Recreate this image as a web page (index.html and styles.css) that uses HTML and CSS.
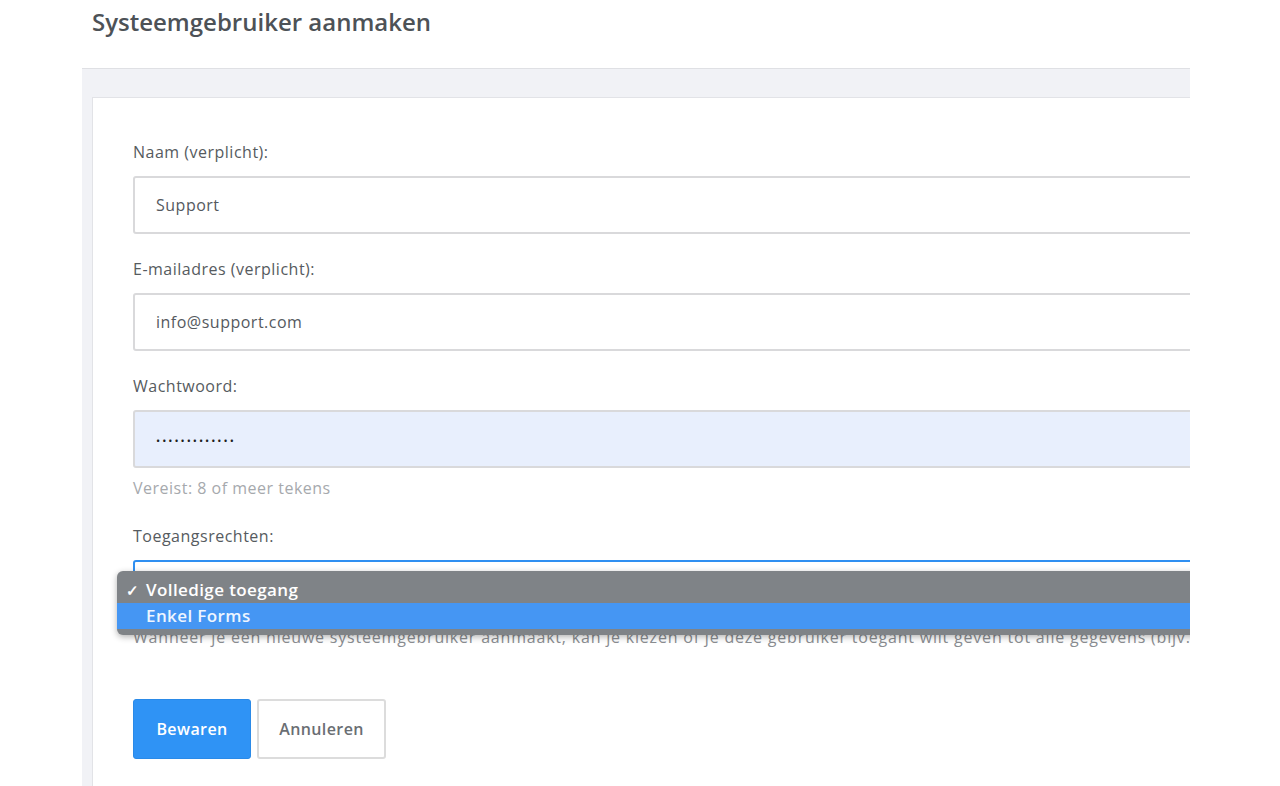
FILE: index.html
```html
<!DOCTYPE html>
<html lang="nl">
<head>
    <meta charset="UTF-8">
    <meta name="viewport" content="width=device-width, initial-scale=1.0">
    <title>Systeemgebruiker aanmaken</title>
    <link rel="stylesheet" href="styles.css">
</head>
<body>
    <div class="page">
        <h1 class="title">Systeemgebruiker aanmaken</h1>

        <div class="panel">
            <div class="card">
                <form class="form">
                    <div class="field">
                        <label class="label" for="naam">Naam (verplicht):</label>
                        <input class="input" id="naam" type="text" value="Support">
                    </div>

                    <div class="field">
                        <label class="label" for="email">E-mailadres (verplicht):</label>
                        <input class="input" id="email" type="text" value="info@support.com">
                    </div>

                    <div class="field">
                        <label class="label" for="pass">Wachtwoord:</label>
                        <div class="input input-password" id="pass">•••••••••••••</div>
                        <div class="hint">Vereist: 8 of meer tekens</div>
                    </div>

                    <div class="field field-select">
                        <label class="label">Toegangsrechten:</label>
                        <div class="select-wrap">
                            <div class="input select"></div>
                            <!-- open native menu -->
                            <div class="menu">
                                <div class="menu-item checked"><span class="check">✓</span>Volledige toegang</div>
                                <div class="menu-item active">Enkel Forms</div>
                            </div>
                        </div>
                        <div class="desc">Wanneer je een nieuwe systeemgebruiker aanmaakt, kan je kiezen of je deze gebruiker toegant wilt geven tot alle gegevens (bijv.</div>
                    </div>

                    <div class="actions">
                        <button type="button" class="btn btn-primary">Bewaren</button>
                        <button type="button" class="btn btn-default">Annuleren</button>
                    </div>
                </form>
            </div>
        </div>
    </div>
</body>
</html>
```

FILE: styles.css
```css
body {
    margin: 0;
    background-color: #fff;
    font-family: "Open Sans", Lato, Arial, sans-serif;
    color: #555a5f;
}
.page {
    width: 1190px;
    height: 786px;
    overflow: hidden;
}
.title {
    margin: 0;
    padding: 6px 0 0 92px;
    height: 68px;
    box-sizing: border-box;
    font-size: 24px;
    font-weight: 600;
    line-height: 32px;
    color: #4d5257;
}
.panel {
    margin-left: 82px;
    width: 1300px;
    height: 720px;
    padding: 28px 0 0 10px;
    box-sizing: border-box;
    background-color: #f1f2f6;
    border-top: 1px solid #dfe0e4;
}
.card {
    background-color: #fff;
    border: 1px solid #e2e3e7;
    padding: 44px 40px 40px 40px;
    height: 800px;
}
.field {
    margin-bottom: 25px;
}
.label {
    display: block;
    font-size: 16px;
    letter-spacing: 0.5px;
    line-height: 20px;
    margin-bottom: 14px;
    color: #565b60;
}
.input {
    display: block;
    width: 1150px;
    height: 58px;
    box-sizing: border-box;
    padding: 0 21px;
    border: 2px solid #d9d9db;
    border-radius: 3px;
    font-family: inherit;
    font-size: 16px;
    letter-spacing: 0.5px;
    color: #55595e;
    background-color: #fff;
    outline: none;
}
.input-password {
    background-color: #e8effd;
    font-size: 11px;
    padding-top: 3px;
    line-height: 51px;
    letter-spacing: 2px;
    color: #1e1e1e;
}
.hint {
    margin-top: 10px;
    font-size: 16px;
    letter-spacing: 0.5px;
    line-height: 20px;
    color: #a6a9ad;
}
.field-select .label {
    margin-top: 28px;
}
.select-wrap {
    position: relative;
}
.select {
    border-color: #2f8ff1;
}
.menu {
    position: absolute;
    left: -16px;
    top: 11px;
    width: 1200px;
    padding: 6px 0;
    background-color: #7f8387;
    border-radius: 6px;
    box-shadow: 0 2px 6px rgba(0, 0, 0, 0.3);
}
.menu-item {
    height: 26px;
    line-height: 26px;
    padding-left: 29px;
    font-size: 17px;
    letter-spacing: 0.4px;
    font-weight: 600;
    color: #fff;
    position: relative;
}
.menu-item.active {
    background-color: #4596f3;
    color: #eef5ff;
}
.check {
    position: absolute;
    left: 9px;
    font-size: 15px;
}
.desc {
    margin-top: 10px;
    font-size: 16px;
    letter-spacing: 0.8px;
    line-height: 18px;
    color: #8a8d91;
    white-space: nowrap;
}
.actions {
    margin-top: 53px;
    display: flex;
    gap: 6px;
}
.btn {
    height: 60px;
    border-radius: 3px;
    font-family: inherit;
    font-size: 16px;
    letter-spacing: 0.4px;
    font-weight: 600;
    cursor: pointer;
}
.btn-primary {
    width: 118px;
    background-color: #2f93f5;
    border: 1px solid #2a8ae8;
    color: #fff;
}
.btn-default {
    width: 129px;
    background-color: #fff;
    border: 2px solid #dcdcdc;
    color: #6a6e73;
}
```
